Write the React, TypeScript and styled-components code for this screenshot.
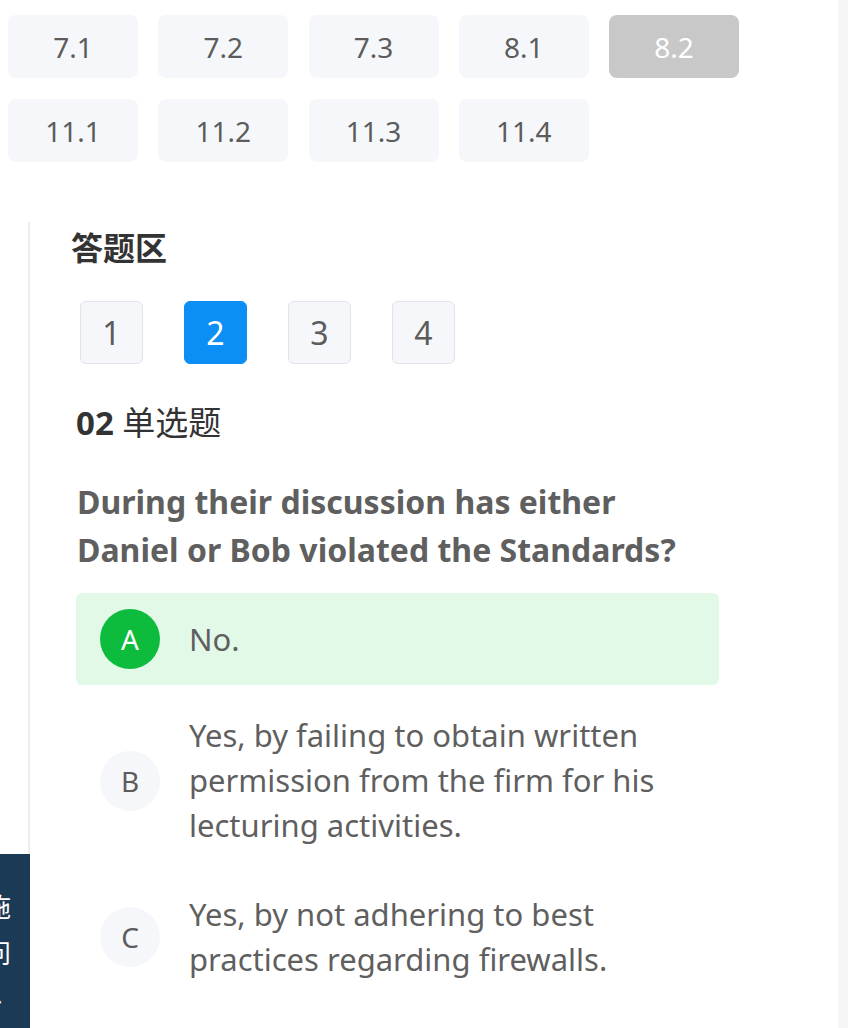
import React from 'react';
import styled, { createGlobalStyle, css } from 'styled-components';

const GlobalStyle = createGlobalStyle`
  html, body {
    margin: 0;
    padding: 0;
    background: #fff;
    overflow: hidden;
  }
  body {
    font-family: 'Noto Sans', 'Noto Sans CJK SC', sans-serif;
    color: #606266;
  }
`;

const Page = styled.div`
  display: flex;
  min-height: 1028px;
`;

const Main = styled.div`
  flex: 1;
  padding: 15px 0 0 8px;
`;

const ScrollTrack = styled.div`
  width: 10px;
  background: #f6f6f6;
`;

const SectionGrid = styled.div`
  display: grid;
  grid-template-columns: repeat(5, 130px);
  column-gap: 20.25px;
  row-gap: 21px;
`;

const SectionButton = styled.div<{ $active?: boolean }>`
  height: 63px;
  border-radius: 8px;
  background: #f5f7fa;
  color: #5c5c5c;
  font-size: 28px;
  display: flex;
  align-items: center;
  justify-content: center;

  ${(props) =>
    props.$active &&
    css`
      background: #c8c8c8;
      color: #fff;
    `}
`;

const AnswerArea = styled.div`
  margin: 60px 0 0 20px;
  border-left: 2px solid #eeeeee;
  padding: 2px 0 0 41px;
  min-height: 820px;
`;

const Title = styled.h2`
  margin: 0;
  font-size: 32px;
  line-height: 48px;
  font-weight: 700;
  color: #333;
`;

const NumberRow = styled.div`
  display: flex;
  gap: 41px;
  margin: 29px 0 0 9px;
`;

const NumberButton = styled.div<{ $active?: boolean }>`
  width: 63px;
  height: 63px;
  box-sizing: border-box;
  border-radius: 6px;
  border: 1px solid #e1e5ea;
  background: #f5f7fa;
  color: #5c5c5c;
  font-size: 32px;
  display: flex;
  align-items: center;
  justify-content: center;

  ${(props) =>
    props.$active &&
    css`
      background: #0b8ff5;
      border-color: #0b8ff5;
      color: #fff;
    `}
`;

const Question = styled.div`
  margin: 35px 0 0 5px;
  width: 643px;
`;

const QuestionType = styled.div`
  font-size: 33px;
  line-height: 48px;
  color: #333;

  b {
    font-weight: 700;
  }
`;

const Stem = styled.div`
  margin-top: 31px;
  font-size: 32px;
  line-height: 48px;
  font-weight: 700;
  color: #5f5f5f;
  padding-left: 1px;
`;

const OptionList = styled.div`
  margin-top: 19px;
  display: flex;
  flex-direction: column;
  gap: 12px;
`;

const OptionRow = styled.div<{ $correct?: boolean }>`
  display: flex;
  align-items: center;
  gap: 29px;
  padding: 16px 24px;
  border-radius: 6px;
  background: ${(props) => (props.$correct ? '#e3f9e8' : 'transparent')};
`;

const OptionBadge = styled.div<{ $correct?: boolean }>`
  flex: none;
  width: 60px;
  height: 60px;
  border-radius: 50%;
  background: ${(props) => (props.$correct ? '#0dbb3d' : '#f5f7fa')};
  color: ${(props) => (props.$correct ? '#fff' : '#5c5c5c')};
  font-size: 28px;
  display: flex;
  align-items: center;
  justify-content: center;
`;

const OptionText = styled.div`
  font-size: 31px;
  line-height: 45px;
  color: #5f5f5f;
  padding-right: 30px;
`;

// fixed side tab, mostly slid off the left edge
const SideTab = styled.div`
  position: fixed;
  left: 0;
  bottom: 0;
  width: 30px;
  height: 174px;
  background: #1b3a56;
  overflow: hidden;
  display: flex;
  flex-direction: column;
  padding-top: 30px;
  box-sizing: border-box;
`;

const SideTabChar = styled.span`
  display: block;
  width: 28px;
  margin-left: -16px;
  color: #fff;
  font-size: 26px;
  line-height: 46px;
  text-align: center;
`;

const sections = ['7.1', '7.2', '7.3', '8.1', '8.2', '11.1', '11.2', '11.3', '11.4'];

const options = [
  { key: 'A', text: 'No.', correct: true },
  { key: 'B', text: 'Yes, by failing to obtain written permission from the firm for his lecturing activities.' },
  { key: 'C', text: 'Yes, by not adhering to best practices regarding firewalls.' },
];

export default function App() {
  return (
    <>
      <GlobalStyle />
      <Page>
        <Main>
          <SectionGrid>
            {sections.map((s) => (
              <SectionButton key={s} $active={s === '8.2'}>
                {s}
              </SectionButton>
            ))}
          </SectionGrid>

          <AnswerArea>
            <Title>答题区</Title>
            <NumberRow>
              {[1, 2, 3, 4].map((n) => (
                <NumberButton key={n} $active={n === 2}>
                  {n}
                </NumberButton>
              ))}
            </NumberRow>

            <Question>
              <QuestionType>
                <b>02</b> 单选题
              </QuestionType>
              <Stem>During their discussion has either Daniel or Bob violated the Standards?</Stem>
              <OptionList>
                {options.map((o) => (
                  <OptionRow key={o.key} $correct={o.correct}>
                    <OptionBadge $correct={o.correct}>{o.key}</OptionBadge>
                    <OptionText>{o.text}</OptionText>
                  </OptionRow>
                ))}
              </OptionList>
            </Question>
          </AnswerArea>
        </Main>
        <ScrollTrack />
      </Page>
      <SideTab>
        {['施', '问', '›'].map((c) => (
          <SideTabChar key={c}>{c}</SideTabChar>
        ))}
      </SideTab>
    </>
  );
}
